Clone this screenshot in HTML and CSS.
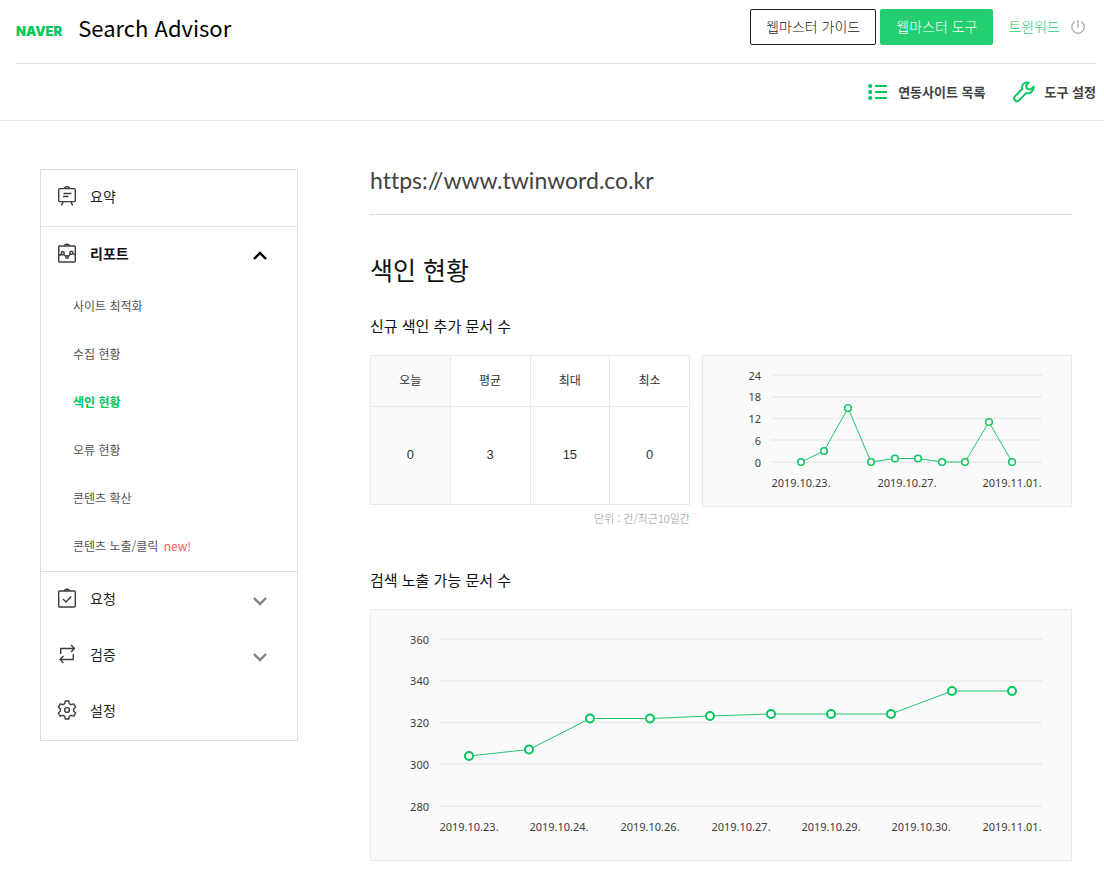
FILE: index.html
```html
<!DOCTYPE html>
<html lang="ko">
<head>
<meta charset="utf-8">
<title>Search Advisor</title>
<meta name="viewport" content="width=device-width, initial-scale=1">
<link rel="stylesheet" href="styles.css">
</head>
<body>
<header class="site-header">
  <div class="top-bar">
    <div class="brand">
      <a class="logo" href="#">NAVER</a>
      <a class="product" href="#">Search Advisor</a>
    </div>
    <div class="account">
      <button class="btn btn-outline" type="button">웹마스터 가이드</button>
      <button class="btn btn-primary" type="button">웹마스터 도구</button>
      <a class="user" href="#">트윈워드</a>
      <button class="power" type="button" aria-label="로그아웃">
        <svg width="16" height="16" viewBox="0 0 16 16" fill="none" stroke="#a3aaa6" stroke-width="1.3" stroke-linecap="round"><path d="M8 1.6v6.6M4.4 3a6.2 6.2 0 1 0 7.2 0"/></svg>
      </button>
    </div>
  </div>
  <nav class="tool-bar">
    <a class="tool" href="#">
      <svg width="20" height="18" viewBox="0 0 20 18"><g fill="#03c75a"><circle cx="2.2" cy="3" r="2.1"/><circle cx="2.2" cy="9" r="2.1"/><circle cx="2.2" cy="15" r="2.1"/><path d="M7 2h12v2H7zM7 8h12v2H7zM7 14h12v2H7z"/></g></svg>
      연동사이트 목록
    </a>
    <a class="tool" href="#">
      <svg width="22" height="22" viewBox="0 0 22 22" fill="none" stroke="#03c75a" stroke-width="1.9" stroke-linejoin="round"><path d="M15.6 1.6C11.6.7 8.300 3.700 9.200 8L1.900 15.300a2.800 2.800 0 0 0 0 4 2.800 2.800 0 0 0 4.200 0L13 12.200c4.200 1 8-2 7.600-6.400L17.500 8.600 14 7.800 13 4.600z"/></svg>
      도구 설정
    </a>
  </nav>
</header>

<main class="page">
  <nav class="sidebar">
    <ul class="menu">
      <li class="menu-group">
        <a class="menu-item" href="#">
          <svg class="icon" viewBox="0 0 20 20"><rect x="1.700" y="2.600" width="16.600" height="13" rx="1"/><path d="M7.500 2.600c0-2.400 5-2.400 5 0M6.500 7.500h8M6 10.500h5.500M6.200 15.800l-1.900 3.600M13.800 15.800l1.900 3.600"/></svg>
          요약
        </a>
      </li>
      <li class="menu-group">
        <button class="menu-item is-open" type="button" aria-expanded="true">
          <svg class="icon" viewBox="0 0 20 20"><rect x="1.700" y="3" width="16.600" height="16" rx="1"/><path d="M7.500 3c0-2.400 5-2.400 5 0M1.700 12.500l2.800-1M7 11.500l1.900 2M11.400 13.500l1.900-2.500M15.800 10.500l2.500 1.300"/><circle cx="5.700" cy="10.300" r="1.500"/><circle cx="10.100" cy="14" r="1.300"/><circle cx="14.400" cy="9.700" r="1.500"/></svg>
          <span class="label">리포트</span>
          <svg class="chevron" viewBox="0 0 16 10"><path d="M2 8l6-6 6 6"/></svg>
        </button>
        <ul class="submenu">
          <li><a class="sub-item" href="#">사이트 최적화</a></li>
          <li><a class="sub-item" href="#">수집 현황</a></li>
          <li><a class="sub-item is-active" href="#">색인 현황</a></li>
          <li><a class="sub-item" href="#">오류 현황</a></li>
          <li><a class="sub-item" href="#">콘텐츠 확산</a></li>
          <li><a class="sub-item" href="#">콘텐츠 노출/클릭 <span class="new">new!</span></a></li>
        </ul>
      </li>
      <li class="menu-group">
        <button class="menu-item" type="button" aria-expanded="false">
          <svg class="icon" viewBox="0 0 20 20"><rect x="1.700" y="3" width="16.600" height="16" rx="1"/><path d="M7.500 3c0-2.400 5-2.400 5 0M6 11l3 3 5.200-5.500"/></svg>
          <span class="label">요청</span>
          <svg class="chevron" viewBox="0 0 16 10"><path d="M2 2l6 6 6-6"/></svg>
        </button>
        <button class="menu-item" type="button" aria-expanded="false">
          <svg class="icon" viewBox="0 0 20 20"><path d="M3.700 10V4.500h14M14 1l3.500 3.500L14 8M16.300 10v5.500H3M6.500 12L3 15.500 6.500 19"/></svg>
          <span class="label">검증</span>
          <svg class="chevron" viewBox="0 0 16 10"><path d="M2 2l6 6 6-6"/></svg>
        </button>
        <a class="menu-item" href="#">
          <svg class="icon" viewBox="0 0 20 20"><path d="M8.300 1h3.400l.6 2.700 1.700 1 2.700-.8 1.900 3-2 2v2.200l2 2-1.900 3-2.700-.8-1.700 1-.6 2.700H8.300l-.6-2.700-1.700-1-2.700.8-1.900-3 2-2V8.900l-2-2 1.900-3 2.700.8 1.700-1z"/><circle cx="10" cy="10" r="2.400"/></svg>
          설정
        </a>
      </li>
    </ul>
  </nav>

  <div class="content">
    <h1 class="site-url">https://www.twinword.co.kr</h1>
    <h2 class="page-title">색인 현황</h2>

    <section class="section">
      <h3 class="section-title">신규 색인 추가 문서 수</h3>
      <div class="summary">
        <div>
          <table class="stats">
            <thead><tr><th scope="col">오늘</th><th scope="col">평균</th><th scope="col">최대</th><th scope="col">최소</th></tr></thead>
            <tbody><tr><td>0</td><td>3</td><td>15</td><td>0</td></tr></tbody>
          </table>
          <p class="unit">단위 : 건/최근10일간</p>
        </div>
        <div class="chart">
          <svg viewBox="0 0 368 150" role="img" aria-label="신규 색인 추가 문서 수">
            <path class="grid" d="M68 19h271M68 41h271M68 62.500h271M68 84h271M68 106h271"/>
            <g class="axis-y"><text x="58" y="24">24</text><text x="58" y="45">18</text><text x="58" y="67">12</text><text x="58" y="89">6</text><text x="58" y="111">0</text></g>
            <g class="axis-x"><text x="98" y="131">2019.10.23.</text><text x="204" y="131">2019.10.27.</text><text x="309" y="131">2019.11.01.</text></g>
            <polyline class="line" points="98,106 121,95 145,52 168,106 192,102.500 215,102.500 239,106 262,106 286,66 309,106"/>
            <g class="dots"><circle cx="98" cy="106" r="3.300"/><circle cx="121" cy="95" r="3.300"/><circle cx="145" cy="52" r="3.300"/><circle cx="168" cy="106" r="3.300"/><circle cx="192" cy="102.500" r="3.300"/><circle cx="215" cy="102.500" r="3.300"/><circle cx="239" cy="106" r="3.300"/><circle cx="262" cy="106" r="3.300"/><circle cx="286" cy="66" r="3.300"/><circle cx="309" cy="106" r="3.300"/></g>
          </svg>
        </div>
      </div>
    </section>

    <section class="section">
      <h3 class="section-title">검색 노출 가능 문서 수</h3>
      <div class="chart">
        <svg viewBox="0 0 700 250" role="img" aria-label="검색 노출 가능 문서 수">
          <path class="grid" d="M68 29h603M68 71h603M68 112.500h603M68 154h603M68 196h603"/>
          <g class="axis-y"><text x="58" y="34">360</text><text x="58" y="75">340</text><text x="58" y="117">320</text><text x="58" y="159">300</text><text x="58" y="201">280</text></g>
          <g class="axis-x"><text x="98" y="221">2019.10.23.</text><text x="188" y="221">2019.10.24.</text><text x="279" y="221">2019.10.26.</text><text x="370" y="221">2019.10.27.</text><text x="460" y="221">2019.10.29.</text><text x="550" y="221">2019.10.30.</text><text x="641" y="221">2019.11.01.</text></g>
          <polyline class="line" points="98,146 158,139.500 219,108.500 279,108.500 339,106 400,104 460,104 520,104 581,81 641,81"/>
          <g class="dots dots-large"><circle cx="98" cy="146" r="4"/><circle cx="158" cy="139.500" r="4"/><circle cx="219" cy="108.500" r="4"/><circle cx="279" cy="108.500" r="4"/><circle cx="339" cy="106" r="4"/><circle cx="400" cy="104" r="4"/><circle cx="460" cy="104" r="4"/><circle cx="520" cy="104" r="4"/><circle cx="581" cy="81" r="4"/><circle cx="641" cy="81" r="4"/></g>
        </svg>
      </div>
    </section>
  </div>
</main>
</body>
</html>
```
FILE: styles.css
```css
* { box-sizing: border-box; }

body {
  margin: 0;
  background: #fff;
  color: #1e1e1e;
  font: 14px/20px "Noto Sans CJK KR", "Noto Sans CJK SC", sans-serif;
}

a { color: inherit; text-decoration: none; }
ul { list-style: none; margin: 0; padding: 0; }
h1, h2, h3, p { margin: 0; font-weight: 400; }
svg { display: block; }

button {
  border: 0;
  padding: 0;
  background: none;
  color: inherit;
  font: inherit;
  cursor: pointer;
}

/* Header */
.site-header { border-bottom: 1px solid #e9e9e9; }

.top-bar {
  display: flex;
  align-items: flex-start;
  justify-content: space-between;
  margin: 0 8px 0 16px;
  padding: 9px 0 18px;
  border-bottom: 1px solid #dfdfdf;
}

.brand { display: flex; align-items: center; gap: 16px; height: 36px; }
.logo {
  padding-top: 8px;
  color: #03c75a;
  font: 900 13px/16px Inter, "DejaVu Sans", sans-serif;
}
.product { color: #000; font-size: 22px; line-height: 36px; }

.account { display: flex; align-items: center; }
.btn {
  height: 36px;
  padding: 0 15px 2px;
  margin-right: 4px;
  border: 1px solid transparent;
  border-radius: 2px;
  font-weight: 300;
}
.btn-outline { border-color: #222; background: #fff; color: #222; }
.btn-primary { background: #23cf6f; color: #fff; }
.user { margin-left: 11px; padding-bottom: 2px; color: #23cf6f; font-weight: 300; }
.power { margin: 0 10px; }

.tool-bar {
  display: flex;
  justify-content: flex-end;
  gap: 27px;
  height: 56px;
  padding-right: 8px;
}
.tool {
  display: flex;
  align-items: center;
  gap: 10px;
  color: #424242;
  font-size: 13px;
  font-weight: 700;
}

/* Page */
.page {
  display: flex;
  align-items: flex-start;
  gap: 72px;
  padding: 48px 32px 8px 40px;
}

.sidebar { flex: 0 0 258px; border: 1px solid #dfdfdf; }
.menu-group + .menu-group { border-top: 1px solid #dfdfdf; }
.menu-item {
  display: flex;
  align-items: center;
  gap: 13px;
  width: 100%;
  height: 56px;
  padding: 0 29px 4px 16px;
  text-align: left;
}
.is-open { font-weight: 700; color: #111; }
.icon {
  width: 20px;
  height: 20px;
  fill: none;
  stroke: #3c3c3c;
  stroke-width: 1.4;
  stroke-linejoin: round;
}
.label { flex: 1; }
.chevron {
  width: 16px;
  height: 10px;
  margin-top: 5px;
  fill: none;
  stroke: #808080;
  stroke-width: 2.4;
}
.is-open .chevron { stroke: #000; }
.sub-item {
  display: block;
  padding: 0 0 2px 32px;
  color: #555;
  font-size: 12px;
  line-height: 46px;
}
.is-active { color: #03c75a; font-weight: 700; }
.new { margin-left: 2px; color: #ff5c5c; }

.content { flex: 1; min-width: 0; }
.site-url {
  padding-bottom: 23px;
  border-bottom: 1px solid #dfdfdf;
  color: #424242;
  font: 23px/22px Lato, "Noto Sans CJK KR", sans-serif;
  font-variant-ligatures: none;
}
.page-title {
  margin: 36px 0 27px;
  color: #111;
  font-size: 25px;
  line-height: 36px;
}
.section { margin-bottom: 42px; }
.section:last-child { margin-bottom: 0; }
.section-title {
  margin-bottom: 17px;
  color: #111;
  font-size: 15px;
  line-height: 24px;
}

.summary {
  display: grid;
  grid-template-columns: 320fr 370fr;
  align-items: start;
  gap: 12px;
}
.stats {
  width: 100%;
  border-collapse: collapse;
  table-layout: fixed;
  text-align: center;
}
.stats th, .stats td {
  padding: 0 0 2px;
  border: 1px solid #e9e9e9;
  color: #333;
  font-weight: 400;
}
.stats th { height: 51px; font-size: 12px; }
.stats td { height: 98px; font: 13px/20px "Liberation Sans", Arial, sans-serif; }
.stats th:first-child, .stats td:first-child { background: #fafafa; }
.unit {
  padding-top: 5px;
  color: #8c9590;
  font-size: 11px;
  font-weight: 300;
  line-height: 16px;
  text-align: right;
}

/* Charts */
.chart { border: 1px solid #e9e9e9; background: #fafafa; }
.chart svg { width: 100%; height: auto; }
.chart text { fill: #3c3c3c; font: 11px "Noto Sans", sans-serif; }
.axis-y text { text-anchor: end; }
.axis-x text { text-anchor: middle; }
.grid { fill: none; stroke: #eee; stroke-width: 2; }
.line { fill: none; stroke: #20c76c; stroke-width: 1; }
.dots { fill: #fff; stroke: #16c765; stroke-width: 1.6; }
.dots-large { stroke: #03c75a; stroke-width: 2; }
```
